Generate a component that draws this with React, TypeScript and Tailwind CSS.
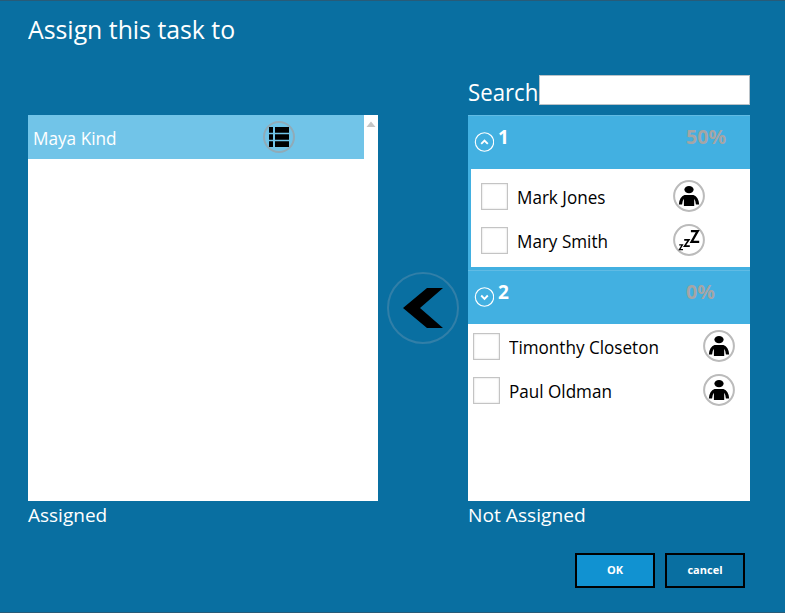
import React from "react";

function PersonIcon() {
  return (
    <svg width="32" height="32" viewBox="0 0 32 32" className="block shrink-0">
      <circle cx="16" cy="16" r="14.9" fill="#fff" stroke="#bbb" strokeWidth="2" />
      <ellipse cx="16" cy="9.6" rx="4.6" ry="3.6" />
      <path d="M11.5 15H20.5Q25.5 16.5 26.2 24.6H22.9Q22.8 21 21.2 18.8V26H10.9V18.8Q9.2 21 9.1 24.6H5.8Q6.5 16.5 11.5 15Z" />
    </svg>
  );
}

function SleepIcon() {
  return (
    <svg width="32" height="32" viewBox="0 0 32 32" className="block shrink-0">
      <circle cx="16" cy="16" r="14.9" fill="#fff" stroke="#bbb" strokeWidth="2" />
      <g fill="none" stroke="#000">
        <path d="M17.9 7.1H24.7L18.6 17.8H26.2" strokeWidth="2.3" />
        <path d="M11.2 15.9H15.8L11.6 22.1H16.8" strokeWidth="1.7" />
        <path d="M6.2 20.9H9.4L6.5 25.6H10" strokeWidth="1.3" />
      </g>
    </svg>
  );
}

function ListIcon() {
  return (
    <svg width="32" height="32" viewBox="0 0 32 32" className="block shrink-0">
      <circle cx="16" cy="16" r="15" fill="none" stroke="#90abb8" strokeWidth="2" />
      <path d="M6 6h4v5.7H6zM12 6h14v5.7H12zM6 13.2h4v5.6H6zM12 13.2h14v5.6H12zM6 20.3h4v5.7H6zM12 20.3h14v5.7H12z" />
    </svg>
  );
}

function Toggle({ open }: { open: boolean }) {
  return (
    <svg width="20" height="20" viewBox="0 0 20 20" className="mt-[16px] ml-[6px] block shrink-0" fill="none" stroke="#fff">
      <circle cx="10.5" cy="10" r="9.2" strokeWidth="1.1" />
      <path d={open ? "M7.2 11.8L10.5 8.5L13.8 11.8" : "M7.2 8.5L10.5 11.8L13.8 8.5"} strokeWidth="1.9" />
    </svg>
  );
}

function GroupHeader({ label, percent, open }: { label: string; percent: string; open: boolean }) {
  return (
    <div className="flex h-[54px] border-t border-[#60bbe4] bg-[#42b0e1] text-[19px] leading-6 font-bold">
      <Toggle open={open} />
      <span className="mt-[9px] ml-[4px] text-white">{label}</span>
      <span className="mt-[9px] ml-auto w-[64px] text-[#a5a5a5]">
        <span className="inline-block origin-left scale-x-[1.03]">{percent}</span>
      </span>
    </div>
  );
}

function PersonRow({ name, asleep }: { name: string; asleep?: boolean }) {
  return (
    <div className="flex h-11 items-center">
      <span className="mt-px h-[27px] w-[27px] shrink-0 border border-[#c4c4c4] bg-white shadow-[inset_0_0_2px_#ccc]" />
      <span className="mt-px ml-[9px] origin-left scale-x-[0.95] text-[18px] leading-6 whitespace-nowrap text-black">{name}</span>
      <span className="ml-auto">{asleep ? <SleepIcon /> : <PersonIcon />}</span>
    </div>
  );
}

export default function App() {
  return (
    <div className="h-[613px] w-[785px] overflow-hidden border-t border-b border-[#285b78] bg-[#096fa1] font-['Open_Sans','Noto_Sans',sans-serif] text-white">
      <h1 className="h-[74px] pt-[10px] pl-[28px] text-[25px] leading-9 font-normal">
        <span className="inline-block origin-left scale-x-[0.993] whitespace-nowrap">Assign this task to</span>
      </h1>
      <main className="flex pl-[28px]">
        <section className="w-[350px] pt-[40px]">
          <div className="flex h-[386px] bg-white">
            <div className="flex h-[44px] w-[336px] items-center bg-[#71c4e8] pl-[5px]">
              <span className="mt-px w-[230px] text-[18px] leading-6">
                <span className="inline-block origin-left scale-x-[0.955]">Maya Kind</span>
              </span>
              <ListIcon />
            </div>
            <svg width="14" height="14" viewBox="0 0 14 14">
              <path d="M2.5 12L7 6.5L11.5 12Z" fill="#c6c6c6" />
            </svg>
          </div>
          <div className="mt-[2px] text-[19px] leading-6">
            <span className="inline-block origin-left">Assigned</span>
          </div>
        </section>
        <div className="flex h-[426px] w-[90px] items-center justify-center pt-[40px]">
          <button className="block" aria-label="Assign">
            <svg width="72" height="72" viewBox="0 0 72 72">
              <circle cx="36" cy="36" r="35" fill="none" stroke="#317fa8" strokeWidth="2" />
              <path d="M16 36L40 16H56L33 36L56 56H40Z" />
            </svg>
          </button>
        </div>
        <section className="w-[282px]">
          <label className="flex h-[30px]">
            <span className="-mt-px w-[71px] text-[23px] leading-9 whitespace-nowrap">
              <span className="inline-block origin-left scale-x-[0.965]">Search</span>
            </span>
            <input className="h-[30px] w-[211px] border border-[#b9c2c8] bg-white outline-none" />
          </label>
          <div className="mt-[10px] h-[386px] bg-white">
            <GroupHeader label="1" percent="50%" open />
            <div className="border-b-[3px] border-l-[3px] border-[#42b0e1] py-[5px] pr-[45px] pl-[10px]">
              <PersonRow name="Mark Jones" />
              <PersonRow name="Mary Smith" asleep />
            </div>
            <GroupHeader label="2" percent="0%" open={false} />
            <div className="pr-[15px] pl-[5px]">
              <PersonRow name="Timonthy Closeton" />
              <PersonRow name="Paul Oldman" />
            </div>
          </div>
          <div className="mt-[2px] text-[19px] leading-6">
            <span className="inline-block origin-left scale-x-[1.01] whitespace-nowrap">Not Assigned</span>
          </div>
        </section>
      </main>
      <footer className="mt-[26px] flex justify-end gap-[10px] pr-[40px] text-[11px] font-bold">
        <button className="h-[35px] w-[80px] border-2 border-black bg-[#1192d1]">OK</button>
        <button className="h-[35px] w-[80px] border-2 border-black">cancel</button>
      </footer>
    </div>
  );
}
